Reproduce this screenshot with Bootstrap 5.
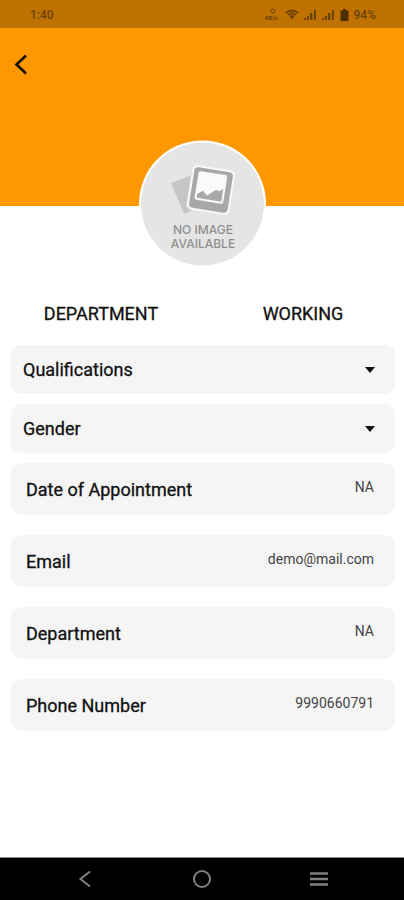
<!DOCTYPE html>
<html lang="en">
<head>
<meta charset="utf-8">
<meta name="viewport" content="width=device-width, initial-scale=1">
<title>Profile</title>
<link href="https://cdn.jsdelivr.net/npm/bootstrap@5.3.0/dist/css/bootstrap.min.css" rel="stylesheet">
<style>
  body { font-family: Roboto, "Liberation Sans", sans-serif; color: #111; background: #fff; }
  .status-strip { height: 28px; padding: 2px 28px 0 30px; background: #bf7200; color: #6b4208; font-size: 12px; line-height: 16px; font-weight: 500; }
  .hero { height: 178px; background: #ff9800; padding: 22px 8px; }
  .back-btn { width: 28px; height: 28px; line-height: 0; }
  .avatar { width: 128px; height: 128px; margin-top: -66px; }
  .heading, .pick, .entry dt { font-size: 18px; font-weight: 400; -webkit-text-stroke: 0.3px #111; }
  .heading { line-height: 24px; }
  .heads { margin-top: 34px; }
  .fields { padding: 19px 9px 24px 11px; }
  .pick { height: 49px; padding: 0 12px; border: 0; border-radius: 10px; background-color: #f5f5f5; color: #111; margin-bottom: 10px;
    background-size: 12px 6px; background-position: right 19px center;
    --bs-form-select-bg-img: url("data:image/svg+xml,%3csvg xmlns='http://www.w3.org/2000/svg' viewBox='0 0 12 6'%3e%3cpath d='M1 0h10L6 6z' fill='%23111'/%3e%3c/svg%3e"); }
  .entry { height: 52px; padding: 0 21px 0 15px; border-radius: 10px; background: #f5f5f5; margin-bottom: 20px; }
  .entry dd { font-size: 14px; color: #444; padding-bottom: 4px; }
  .sys-nav { height: 43px; background: #000; border-top: 1px solid #888; padding: 0 27px; }
  .sys-nav .btn { line-height: 0; }
</style>
<script src="https://cdn.jsdelivr.net/npm/bootstrap@5.3.0/dist/js/bootstrap.bundle.min.js"></script>
</head>
<body>
<div class="d-flex flex-column min-vh-100">
  <div class="status-strip d-flex align-items-center justify-content-between">
    <span>1:40</span>
    <div class="d-flex align-items-center">
      <svg width="86" height="16" viewBox="0 0 86 16" fill="currentColor" aria-hidden="true">
        <ellipse cx="9" cy="4" rx="2" ry="2" fill="none" stroke="currentColor" stroke-width="1"/>
        <text x="1" y="13" font-size="6" font-weight="700">KB/s</text>
        <path d="M22 6q6-5 12 0M24 8q4-3 8 0" fill="none" stroke="currentColor" stroke-width="1.8"/>
        <path d="M25.500 9q2.500-1.500 5 0L28 12.500z"/>
        <path d="M40 11h2v2h-2zM43 9h2v4h-2zM46 6h2.500v7H46zM50 3h2v10h-2z"/>
        <path d="M58 11h2v2h-2zM61 9h2v4h-2zM64 6h2.500v7H64zM68 3h2v10h-2z"/>
        <path d="M79 2h3v1.500h2.500V14h-8V3.500H79z" fill="#4d2c00"/>
      </svg>
      <span class="ms-1">94%</span>
    </div>
  </div>
  <header class="hero">
    <button type="button" class="btn back-btn p-0 border-0 text-start" aria-label="Back">
      <svg width="24" height="28" viewBox="0 0 24 28" fill="none" stroke="#111" stroke-width="2.600"><path d="M18 5.500L8.500 14.500 18 23.500"/></svg>
    </button>
  </header>
  <main>
    <svg class="avatar d-block mx-auto" viewBox="0 0 128 128" role="img" aria-label="No image available">
      <circle cx="64.500" cy="64" r="63.500" fill="#fff"/>
      <circle cx="64.500" cy="64" r="61.500" fill="#e5e5e5"/>
      <path d="M33 43l20-7.500-5 31 9 2-9 5q-1.500 1-2.500-1z" fill="#c6c6c6"/>
      <g transform="rotate(9 73 50)">
        <rect x="51.500" y="27.500" width="43" height="45" rx="5" fill="#f8f8f8"/>
        <rect x="53.500" y="29.500" width="39" height="41" rx="4" fill="#a8a8a8"/>
        <rect x="58" y="33" width="29" height="29" rx="2" fill="#fafafa"/>
        <path d="M60 60v-4l5-4 5 4 8-7 3 1 4-3v13z" fill="#a8a8a8"/>
      </g>
      <g font-family="Inter, sans-serif" font-size="12" font-weight="500" fill="#909090" text-anchor="middle">
        <text x="65" y="94">NO IMAGE</text>
        <text x="65" y="108">AVAILABLE</text>
      </g>
    </svg>
    <div class="row g-0 heads text-center">
      <h1 class="col-6 heading mb-0">DEPARTMENT</h1>
      <h2 class="col-6 heading mb-0">WORKING</h2>
    </div>
    <div class="fields">
      <select class="form-select pick" aria-label="Qualifications"><option>Qualifications</option></select>
      <select class="form-select pick" aria-label="Gender"><option>Gender</option></select>
      <dl class="mb-0">
        <div class="entry d-flex align-items-center justify-content-between"><dt>Date of Appointment</dt><dd class="mb-0">NA</dd></div>
        <div class="entry d-flex align-items-center justify-content-between"><dt>Email</dt><dd class="mb-0">demo@mail.com</dd></div>
        <div class="entry d-flex align-items-center justify-content-between"><dt>Department</dt><dd class="mb-0">NA</dd></div>
        <div class="entry d-flex align-items-center justify-content-between"><dt>Phone Number</dt><dd class="mb-0">9990660791</dd></div>
      </dl>
    </div>
  </main>
  <nav class="sys-nav mt-auto d-flex align-items-center" aria-label="System">
    <button type="button" class="btn p-0 border-0 flex-fill" aria-label="Back"><svg width="20" height="20" viewBox="0 0 20 20" fill="none" stroke="#808080" stroke-width="2"><path d="M15 2.500L5.500 10l9.500 7.500"/></svg></button>
    <button type="button" class="btn p-0 border-0 flex-fill" aria-label="Home"><svg width="20" height="20" viewBox="0 0 20 20" fill="none" stroke="#808080" stroke-width="2"><circle cx="10" cy="10" r="8"/></svg></button>
    <button type="button" class="btn p-0 border-0 flex-fill" aria-label="Recent apps"><svg width="20" height="20" viewBox="0 0 20 20" fill="none" stroke="#808080" stroke-width="2.500"><path d="M1 4.500h18M1 10h18M1 15.500h18"/></svg></button>
  </nav>
</div>
</body>
</html>
